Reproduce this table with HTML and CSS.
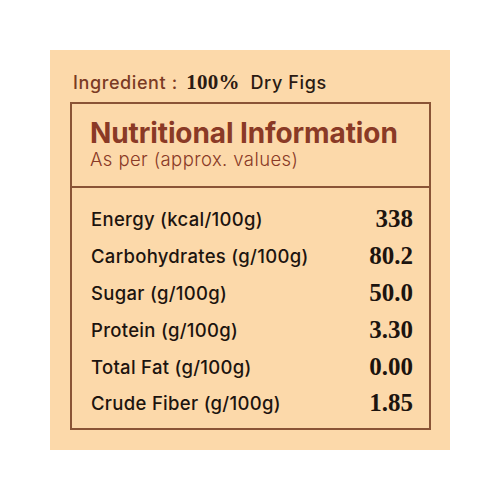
FILE: index.html
```html
<!DOCTYPE html>
<html>
<head>
<meta charset="utf-8">
<link rel="stylesheet" href="styles.css">
</head>
<body>
<div class="panel">
  <div class="ingredient"><span class="ing-label">Ingredient : </span><span class="ing-pct">100%</span> <span class="ing-name">Dry Figs</span></div>
  <div class="box">
    <div class="box-head">
      <div class="title">Nutritional Information</div>
      <div class="subtitle">As per (approx. values)</div>
    </div>
    <div class="rows">
      <div class="row"><span class="label">Energy (kcal/100g)</span><span class="value">338</span></div>
      <div class="row"><span class="label">Carbohydrates (g/100g)</span><span class="value">80.2</span></div>
      <div class="row"><span class="label">Sugar (g/100g)</span><span class="value">50.0</span></div>
      <div class="row"><span class="label">Protein (g/100g)</span><span class="value">3.30</span></div>
      <div class="row"><span class="label">Total Fat (g/100g)</span><span class="value">0.00</span></div>
      <div class="row"><span class="label">Crude Fiber (g/100g)</span><span class="value">1.85</span></div>
    </div>
  </div>
</div>
</body>
</html>
```
FILE: styles.css
```css
html, body {
  margin: 0;
  padding: 0;
  background: #ffffff;
}
body {
  width: 500px;
  height: 500px;
  font-family: "Inter", "Liberation Sans", sans-serif;
}
.panel {
  margin: 50px 0 0 50px;
  width: 400px;
  height: 400px;
  box-sizing: border-box;
  background: #fcd9aa;
  padding: 20px 19px 0 20px;
}
.ingredient {
  height: 32px;
  line-height: 24px;
  font-size: 18px;
  padding-left: 3px;
  color: #7b3b24;
  letter-spacing: 0.6px;
}
.ing-label {
  font-weight: 500;
}
.ing-pct {
  font-family: "Liberation Serif", serif;
  font-weight: 700;
  font-size: 21px;
  letter-spacing: 0.3px;
  margin-left: 3px;
  color: #2a1a12;
}
.ing-name {
  font-weight: 500;
  margin-left: 5px;
  color: #2a1a12;
}
.box {
  border: 2px solid #8a5436;
  height: 328px;
  box-sizing: border-box;
}
.box-head {
  border-bottom: 2px solid #8a5436;
  padding: 13px 0 0 18px;
  height: 84px;
  box-sizing: border-box;
}
.title {
  font-size: 28px;
  font-weight: 700;
  color: #8a3a26;
  line-height: 32px;
  letter-spacing: -0.1px;
}
.subtitle {
  font-size: 18.5px;
  font-weight: 300;
  color: #8a3a26;
  line-height: 20px;
  letter-spacing: 0.4px;
}
.rows {
  display: flex;
  flex-direction: column;
  padding: 13px 16px 0 19px;
}
.row {
  display: flex;
  justify-content: space-between;
  align-items: center;
  height: 36.8px;
}
.label {
  font-size: 18.5px;
  font-weight: 500;
  color: #1c140f;
  letter-spacing: 0.3px;
}
.value {
  font-family: "Liberation Serif", serif;
  font-weight: 700;
  font-size: 25px;
  color: #1c140f;
}
```
